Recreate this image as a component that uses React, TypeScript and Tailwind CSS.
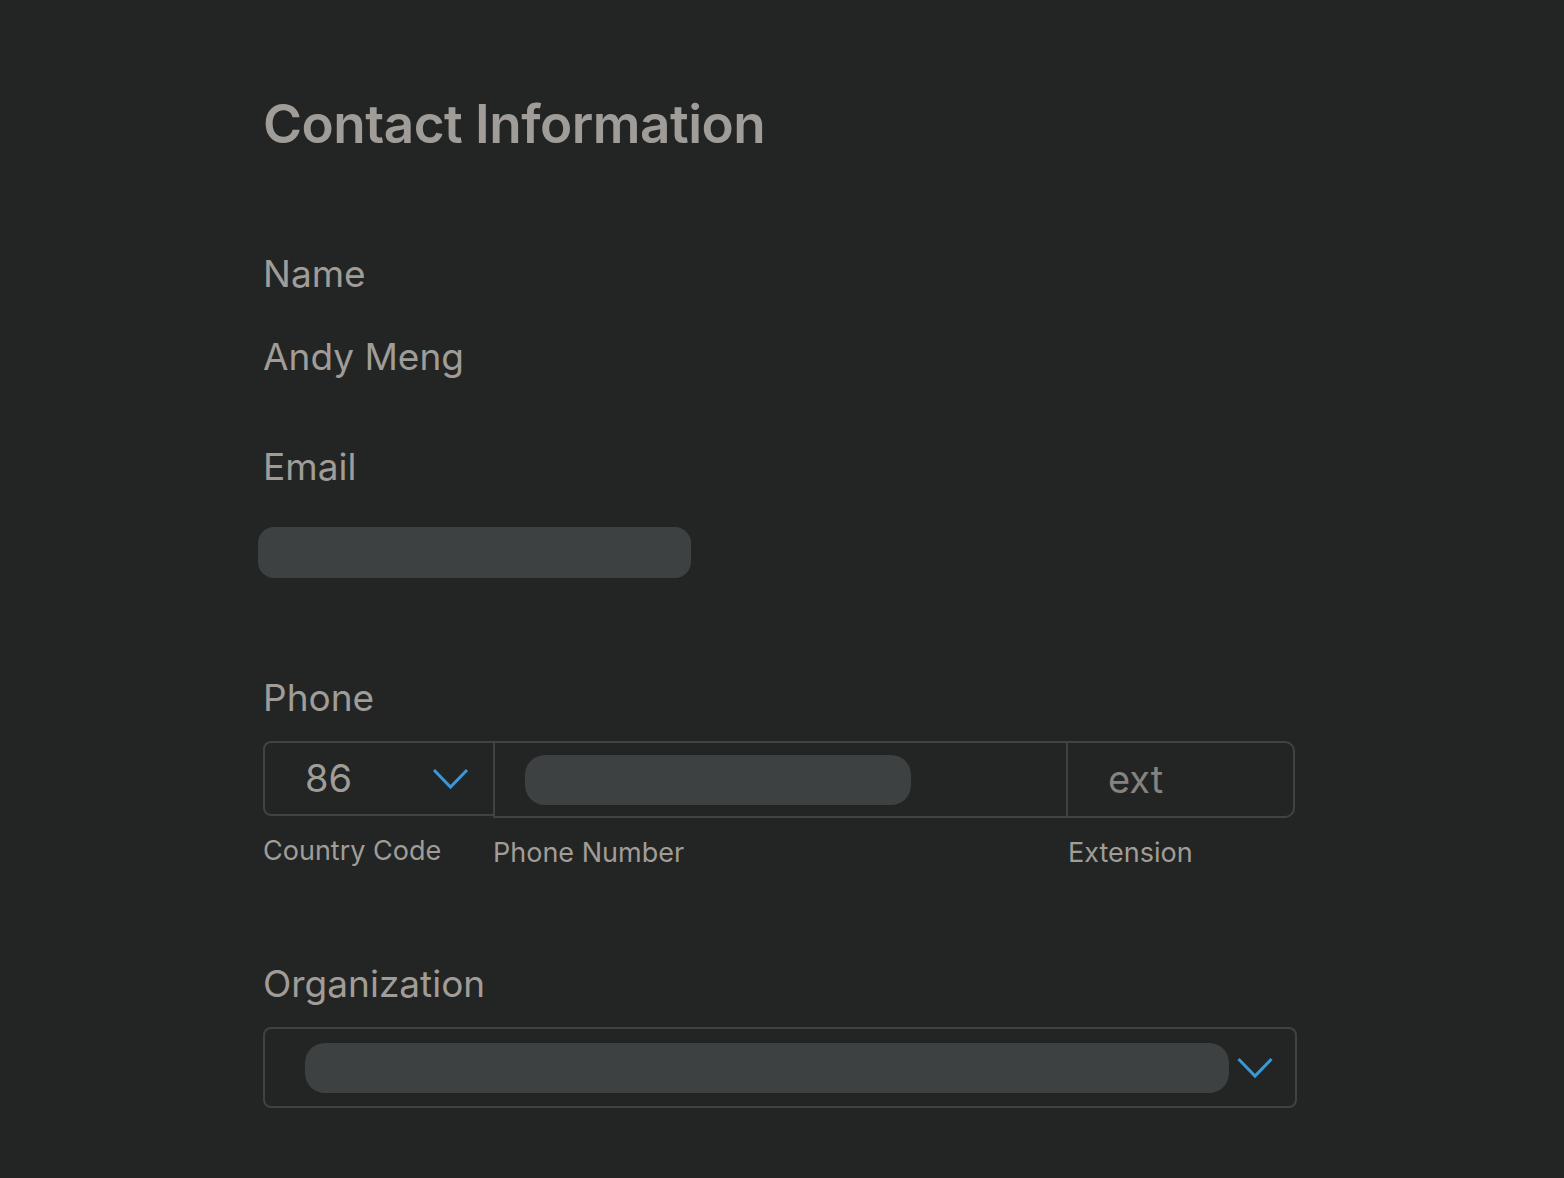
const text = 'text-[#a09d98]'

function Chevron({ className }: { className?: string }) {
    return (
        <svg
            viewBox="0 0 36 22"
            className={className}
            fill="none"
            stroke="#3b98d6"
            strokeWidth="3"
        >
            <path d="M1.5 2 L18 19 L34.5 2" />
        </svg>
    )
}

function Blur({ className }: { className?: string }) {
    return <div className={`bg-[#3d4142] ${className ?? ''}`} />
}

export default function App() {
    return (
        <div
            className="min-h-[1178px] w-full bg-[#232525] pl-[263px] pt-[92px]"
            style={{ fontFamily: 'Inter, "Noto Sans", sans-serif' }}
        >
            <h1 className={`text-[53px] font-semibold leading-[64px] tracking-[-0.5px] ${text}`}>
                Contact Information
            </h1>

            <section className="mt-[96px] flex flex-col">
                <p className={`text-[37px] leading-[44px] ${text}`}>Name</p>
                <p className={`mt-[39px] text-[37px] leading-[44px] ${text}`}>
                    Andy Meng
                </p>
            </section>

            <section className="mt-[66px] flex flex-col">
                <p className={`text-[37px] leading-[44px] ${text}`}>Email</p>
                <Blur className="-ml-[5px] mt-[38px] h-[51px] w-[433px] rounded-[16px]" />
            </section>

            <section className="mt-[98px] flex flex-col">
                <p className={`text-[37px] leading-[44px] ${text}`}>Phone</p>
                <div className="mt-[21px] flex w-[1032px]">
                    <div className="flex h-[75px] w-[230px] items-center rounded-l-[8px] border-2 border-r-0 border-[#414343] pl-[40px] pr-[24px]">
                        <span className={`flex-1 text-[38px] ${text}`}>86</span>
                        <Chevron className="h-[22px] w-[37px]" />
                    </div>
                    <div className="flex h-[77px] w-[575px] items-center border-2 border-[#414343] pl-[30px]">
                        <Blur className="h-[50px] w-[386px] rounded-[20px]" />
                    </div>
                    <div className="flex h-[77px] flex-1 items-center rounded-r-[10px] border-2 border-l-0 border-[#414343] pl-[40px]">
                        <span className="text-[38px] text-[#85837f]">ext</span>
                    </div>
                </div>
                <div className={`mt-[17px] flex text-[27px] leading-[32px] ${text}`}>
                    <span className="w-[230px]">Country Code</span>
                    <span className="mt-[2px] w-[575px]">Phone Number</span>
                    <span className="mt-[2px]">Extension</span>
                </div>
            </section>

            <section className="mt-[93px] flex flex-col">
                <p className={`text-[37px] leading-[44px] ${text}`}>Organization</p>
                <div className="mt-[21px] flex h-[81px] w-[1034px] items-center rounded-[8px] border-2 border-[#414343] pl-[40px] pr-[22px]">
                    <Blur className="h-[50px] flex-1 rounded-[20px]" />
                    <Chevron className="ml-[8px] h-[22px] w-[36px]" />
                </div>
            </section>
        </div>
    )
}
